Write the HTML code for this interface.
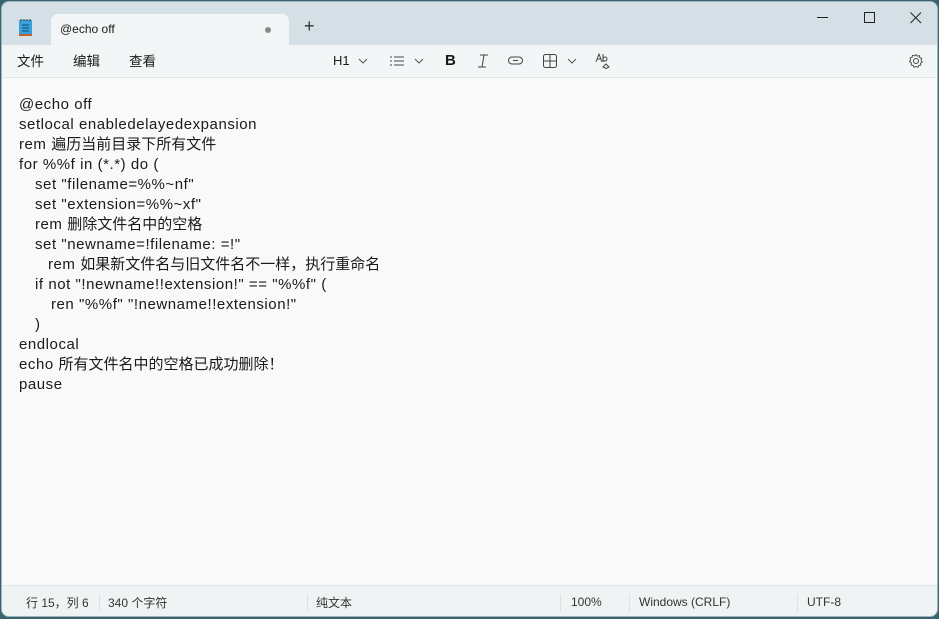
<!DOCTYPE html>
<html><head><meta charset="utf-8"><style>
*{margin:0;padding:0;box-sizing:border-box}
html,body{width:939px;height:619px;overflow:hidden;background:#3a6470}
body{font-family:"Liberation Sans","Noto Sans CJK SC",sans-serif;color:#1a1a1a}
.win{position:absolute;left:1px;top:1px;width:937px;height:616px;background:#f9f9f9;border-radius:8px;overflow:hidden;border:1px solid #9fb3ba}
.title{position:absolute;left:0;top:0;width:100%;height:43px;background:#d4e0e5}
.tab{position:absolute;left:49px;top:12px;width:238px;height:32px;background:#f3f6f7;border-radius:7px 7px 0 0}
.tab span{position:absolute;left:9px;top:8px;font-size:12px}
.dot{position:absolute;left:214px;top:13px;width:6px;height:6px;border-radius:50%;background:#888}
.plus{position:absolute;left:302px;top:15px;font-size:18px;color:#333;line-height:1}
.tb{position:absolute;left:0;top:43px;width:100%;height:33px;background:#f3f6f7;border-bottom:1px solid #e3e6e8}
.menu{position:absolute;top:5px;font-size:13.5px}
.content{position:absolute;left:17px;top:93px;font-size:15px;line-height:20px;letter-spacing:0.55px}
.content div{height:20px;white-space:pre}
.content i{font-style:normal;letter-spacing:0}
.status{position:absolute;left:0;top:583px;width:100%;height:33px;background:#f0f3f4;border-top:1px solid #e1e5e7;font-size:12px;color:#333}
.status span{position:absolute;top:8px}
.sep{position:absolute;top:8px;width:1px;height:18px;background:#dde1e3}
svg{position:absolute}
</style></head><body>
<div class="win">
<div class="title">
<svg style="left:16px;top:16px" width="16" height="20" viewBox="0 0 16 20"><rect x="1" y="2" width="13" height="16" rx="1" fill="#3aa0d8"/><rect x="1" y="16" width="13" height="2" fill="#c06030"/><path d="M4 7h7M4 10h7M4 13h7" stroke="#0d4a7a" stroke-width="1"/><path d="M3 1v2M6 1v2M9 1v2M12 1v2" stroke="#333" stroke-width="1"/></svg>
<div class="tab"><span>@echo off</span><div class="dot"></div></div>
<div class="plus">+</div>
<svg style="left:815px;top:15px" width="12" height="2"><rect width="11" height="1" fill="#222"/></svg>
<svg style="left:862px;top:10px" width="12" height="12"><rect x="0.5" y="0.5" width="10" height="10" fill="none" stroke="#222"/></svg>
<svg style="left:908px;top:10px" width="12" height="12"><path d="M0.5 0.5L11 11M11 0.5L0.5 11" stroke="#222"/></svg>
</div>
<div class="tb">
<span class="menu" style="left:15px">文件</span>
<span class="menu" style="left:71px">编辑</span>
<span class="menu" style="left:127px">查看</span>
<span class="menu" style="left:331px;font-size:13px;top:8px">H1</span>
<svg style="left:356px;top:13px" width="10" height="6"><path d="M1 1l4 4 4-4" fill="none" stroke="#555"/></svg>
<svg style="left:388px;top:11px" width="14" height="10"><path d="M0 1h2M0 5h2M0 9h2M4 1h10M4 5h10M4 9h10" stroke="#444"/></svg>
<svg style="left:412px;top:13px" width="10" height="6"><path d="M1 1l4 4 4-4" fill="none" stroke="#555"/></svg>
<span class="menu" style="left:443px;font-weight:bold;font-size:15px;top:7px">B</span>
<svg style="left:475px;top:9px" width="12" height="14"><path d="M3 1h8M1 13h8M7 1L5 13" stroke="#444" fill="none"/></svg>
<svg style="left:506px;top:11px" width="16" height="10"><rect x="0.5" y="1" width="14" height="7" rx="3.5" fill="none" stroke="#444"/><path d="M5 4.5h5" stroke="#444"/></svg>
<svg style="left:541px;top:9px" width="14" height="14"><rect x="0.5" y="0.5" width="13" height="13" rx="2" fill="none" stroke="#444"/><path d="M7 0v14M0 7h14" stroke="#444"/></svg>
<svg style="left:565px;top:13px" width="10" height="6"><path d="M1 1l4 4 4-4" fill="none" stroke="#555"/></svg>
<svg style="left:593px;top:8px" width="16" height="16" viewBox="0 0 16 16"><path d="M1 9L4 1l3 8M2.2 6h3.6" fill="none" stroke="#444"/><path d="M8 1v8M8 6a2 2 0 1 1 0 .1" fill="none" stroke="#444"/><path d="M8 14l3-3 3 3-3 1.5z" fill="none" stroke="#444"/></svg>
<svg style="left:906px;top:8px" width="16" height="16" viewBox="0 0 16 16"><circle cx="8" cy="8" r="2.5" fill="none" stroke="#444"/><path d="M8 1.5l1.3 1.7 2-.6.4 2 2 .7-.6 2 1.2 1.6-1.7 1.2.2 2-2 .3-.9 1.9-1.9-.8-1.9.8-.9-1.9-2-.3.2-2L1.5 8.6l1.2-1.6-.6-2 2-.7.4-2 2 .6z" fill="none" stroke="#444" stroke-width="0.9"/></svg>
</div>
<div class="content"><div>@echo off</div><div>setlocal enabledelayedexpansion</div><div>rem <i>遍历当前目录下所有文件</i></div><div>for %%f in (*.*) do (</div><div style="padding-left:16px">set "filename=%%~nf"</div><div style="padding-left:16px">set "extension=%%~xf"</div><div style="padding-left:16px">rem <i>删除文件名中的空格</i></div><div style="padding-left:16px">set "newname=!filename: =!"</div><div style="padding-left:29px">rem <i>如果新文件名与旧文件名不一样，执行重命名</i></div><div style="padding-left:16px">if not "!newname!!extension!" == "%%f" (</div><div style="padding-left:32px">ren "%%f" "!newname!!extension!"</div><div style="padding-left:16px">)</div><div>endlocal</div><div>echo <i>所有文件名中的空格已成功删除！</i></div><div>pause</div></div>
<div class="status">
<span style="left:24px">行 15，列 6</span><div class="sep" style="left:97px"></div>
<span style="left:106px">340 个字符</span><div class="sep" style="left:305px"></div>
<span style="left:314px">纯文本</span><div class="sep" style="left:558px"></div>
<span style="left:569px;top:9px">100%</span><div class="sep" style="left:627px"></div>
<span style="left:637px;top:9px">Windows (CRLF)</span><div class="sep" style="left:795px"></div>
<span style="left:805px;top:9px">UTF-8</span>
</div>
</div>
</body></html>
